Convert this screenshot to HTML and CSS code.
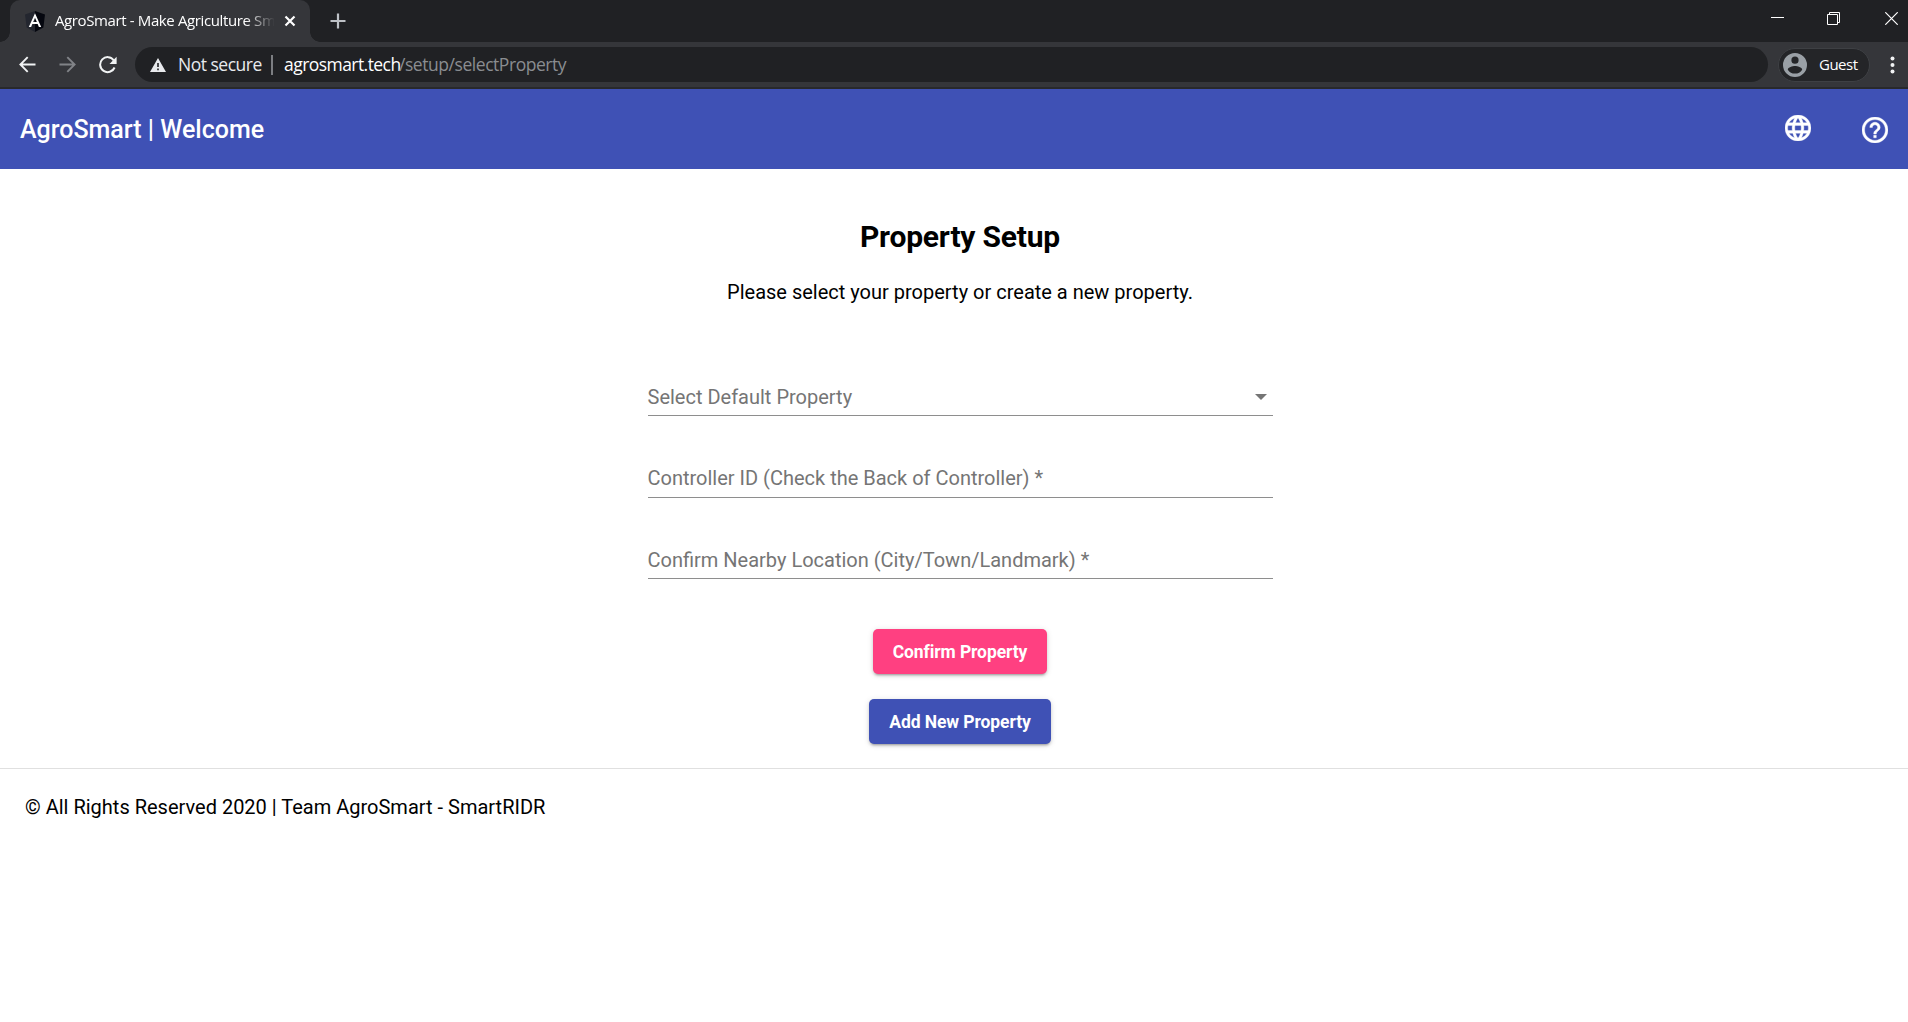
FILE: index.html
```html
<!DOCTYPE html>
<html lang="en">
<head>
<meta charset="utf-8">
<title>AgroSmart - Make Agriculture Smart</title>
<link rel="stylesheet" href="styles.css">
</head>
<body>
<div class="tabstrip">
  <div class="tab">
    <svg class="favicon" width="20" height="21" viewBox="0 0 20 21"><path fill="#23262f" d="M10 0 0 3.5l1.600 13L10 21z"/><path fill="#05070f" d="m10 0 10 3.500-1.600 13L10 21z"/><path fill="#fff" d="M10 2.300 3.800 16h2.300l1.250-3h5.300l1.250 3h2.300zm0 4.400 1.850 4.400h-3.700z"/></svg>
    <span class="tab-title">AgroSmart - Make Agriculture Smart</span>
    <svg class="tab-close" width="12" height="12" viewBox="0 0 12 12"><path d="m1.500 1.500 9 9m0-9-9 9" stroke="#fff" stroke-width="2.200"/></svg>
  </div>
  <svg class="newtab" width="16" height="16" viewBox="0 0 16 16"><path d="M8 .5v15M.5 8h15" stroke="#bdc1c6" stroke-width="2.200"/></svg>
  <div class="window-controls">
    <svg width="13" height="13" viewBox="0 0 13 13"><path d="M0 5.500h13" stroke="#fff"/></svg>
    <svg width="13" height="13" viewBox="0 0 13 13"><path d="M.5 2.500h10v10H.5zm2 0v-2h10v10h-2" fill="none" stroke="#fff"/></svg>
    <svg width="13" height="13" viewBox="0 0 13 13"><path d="m.3.3 12.400 12.400m0-12.400L.3 12.700" stroke="#fff" stroke-width="1.200"/></svg>
  </div>
</div>
<div class="toolbar">
  <svg class="nav" width="17" height="17" viewBox="0 0 17 17"><path d="M16.500 8.500H1.500M8.700 1.200 1.400 8.500l7.300 7.300" fill="none" stroke="#f1f3f4" stroke-width="1.900"/></svg>
  <svg class="nav" width="17" height="17" viewBox="0 0 17 17"><path d="M.5 8.500h15M8.300 1.200l7.300 7.300-7.300 7.300" fill="none" stroke="#818387" stroke-width="1.900"/></svg>
  <svg class="nav" width="18" height="18" viewBox="0 0 18 18"><path d="M15.600 11.500a7.500 7.500 0 1 1-.8-7.200" fill="none" stroke="#f1f3f4" stroke-width="2"/><path d="M17.600.8v7.100h-7.100z" fill="#f1f3f4"/></svg>
  <div class="omnibox">
    <svg width="16" height="14" viewBox="0 0 16 14"><path fill="#e8eaed" fill-rule="evenodd" d="M8 0 0 14h16zM7.200 5h1.600v4H7.200zm0 5.500h1.600v1.700H7.200z"/></svg>
    <span class="insecure">Not secure</span>
    <span class="separator"></span>
    <span class="host">agrosmart.tech</span><span class="path">/setup/selectProperty</span>
  </div>
  <div class="profile">
    <svg width="24" height="24" viewBox="0 0 24 24"><path fill="#9aa0a6" fill-rule="evenodd" d="M12 0a12 12 0 1 0 0 24 12 12 0 0 0 0-24zm0 3.600a3.600 3.600 0 1 1 0 7.200 3.600 3.600 0 0 1 0-7.200zm0 17a8.600 8.600 0 0 1-7.200-3.900c.1-2.400 4.800-3.600 7.200-3.600s7.100 1.200 7.200 3.600a8.600 8.600 0 0 1-7.200 3.900z"/></svg>
    <span>Guest</span>
  </div>
  <svg class="menu" width="5" height="18" viewBox="0 0 5 18"><g fill="#f1f3f4"><circle cx="2.500" cy="2.500" r="2"/><circle cx="2.500" cy="9" r="2"/><circle cx="2.500" cy="15.500" r="2"/></g></svg>
</div>
<header class="appbar">
  <h1 class="brand">AgroSmart | Welcome</h1>
  <svg class="globe" width="26" height="26" viewBox="2 2 20 20"><path fill="#fff" stroke="#fff" stroke-width=".3" d="M11.990 2C6.470 2 2 6.480 2 12s4.470 10 9.990 10C17.520 22 22 17.520 22 12S17.520 2 11.990 2zm6.930 6h-2.950c-.32-1.250-.78-2.450-1.380-3.560 1.840.63 3.370 1.910 4.330 3.560zM12 4.040c.83 1.200 1.480 2.530 1.910 3.960h-3.820c.43-1.430 1.080-2.760 1.910-3.960zM4.260 14C4.100 13.360 4 12.690 4 12s.1-1.360.26-2h3.380c-.08.66-.14 1.320-.14 2s.06 1.340.14 2H4.260zm.82 2h2.950c.32 1.250.78 2.450 1.380 3.560-1.840-.63-3.370-1.900-4.330-3.560zm2.950-8H5.080c.96-1.660 2.490-2.930 4.330-3.560C8.810 5.550 8.350 6.750 8.030 8zM12 19.960c-.83-1.200-1.480-2.530-1.910-3.960h3.820c-.43 1.430-1.080 2.760-1.910 3.960zM14.340 14H9.660c-.09-.66-.16-1.320-.16-2s.07-1.350.16-2h4.680c.09.65.16 1.320.16 2s-.07 1.340-.16 2zm.25 5.560c.6-1.110 1.060-2.310 1.380-3.560h2.950c-.96 1.650-2.490 2.930-4.330 3.560zM16.360 14c.08-.66.14-1.320.14-2s-.06-1.340-.14-2h3.380c.16.640.26 1.310.26 2s-.1 1.360-.26 2h-3.380z"/></svg>
  <svg class="help" width="26" height="26" viewBox="2 2 20 20"><path fill="#fff" stroke="#fff" stroke-width=".3" d="M11 18h2v-2h-2v2zm1-16C6.480 2 2 6.480 2 12s4.480 10 10 10 10-4.480 10-10S17.520 2 12 2zm0 18c-4.410 0-8-3.590-8-8s3.590-8 8-8 8 3.590 8 8-3.590 8-8 8zm0-14c-2.210 0-4 1.790-4 4h2c0-1.100.9-2 2-2s2 .9 2 2c0 2-3 1.750-3 5h2c0-2.250 3-2.500 3-5 0-2.210-1.790-4-4-4z"/></svg>
</header>
<main class="setup">
  <h2 class="title">Property Setup</h2>
  <p class="lead">Please select your property or create a new property.</p>
  <form class="fields">
    <div class="field"><span>Select Default Property</span><i class="arrow"></i></div>
    <div class="field controller"><span>Controller ID (Check the Back of Controller) *</span></div>
    <div class="field"><span>Confirm Nearby Location (City/Town/Landmark) *</span></div>
  </form>
  <button class="btn confirm">Confirm Property</button>
  <button class="btn add">Add New Property</button>
</main>
<footer class="footer">© All Rights Reserved 2020 | Team AgroSmart - SmartRIDR</footer>
</body>
</html>
```
FILE: styles.css
```css
* { box-sizing: border-box; }
body { margin: 0; height: 1022px; overflow: hidden; background: #fff; color: #000; font-family: Roboto, sans-serif; }
svg { display: block; flex: none; }
h1, h2, p { margin: 0; }

.tabstrip { height: 42px; background: #202124; display: flex; align-items: center; padding-left: 10px; color: #fff; font-family: "Open Sans", sans-serif; }
.tab { position: relative; width: 300px; height: 42px; background: #35363a; border-radius: 10px 10px 0 0; display: flex; align-items: center; padding-left: 15px; }
.tab::before, .tab::after { content: ""; position: absolute; bottom: 0; width: 10px; height: 10px; }
.tab::before { left: -10px; background: radial-gradient(circle at 0 0, transparent 9.500px, #35363a 10px); }
.tab::after { right: -10px; background: radial-gradient(circle at 100% 0, transparent 9.500px, #35363a 10px); }
.tab-title { margin-left: 10px; padding-bottom: 2px; width: 219px; overflow: hidden; white-space: nowrap; font-size: 15px; letter-spacing: -.38px; line-height: 22px; -webkit-mask-image: linear-gradient(90deg, #000 190px, transparent 220px); mask-image: linear-gradient(90deg, #000 190px, transparent 220px); }
.tab-close { margin-left: 10px; }
.newtab { margin-left: 19.500px; }
.window-controls { margin-left: auto; padding: 0 10px 5px 0; display: flex; gap: 43px; }
.window-controls svg:nth-child(2) { margin-right: 2px; }

.toolbar { height: 47px; background: #35363a; border-bottom: 2px solid #28292c; display: flex; align-items: center; padding-left: 19px; font-family: "Open Sans", sans-serif; color: #fff; }
.nav + .nav { margin-left: 23px; }
.omnibox { margin-left: 18px; width: 1633px; height: 35px; border-radius: 18px; background: #202124; display: flex; align-items: center; padding-left: 15px; font-size: 17.500px; white-space: nowrap; }
.insecure, .host, .path, .profile span { padding-bottom: 1px; }
.insecure { margin-left: 12px; width: 84px; color: #e8eaed; letter-spacing: -.5px; }
.separator { width: 2px; height: 20px; margin: 0 11px 0 9px; background: #7c7e82; }
.host { width: 115px; letter-spacing: -.55px; }
.path { color: #8a8d91; letter-spacing: -.45px; }
.profile { margin-left: 10px; width: 92px; height: 34px; border: 1px solid #3e4044; border-radius: 17px; background: #242528; display: flex; align-items: center; gap: 12px; padding-left: 4px; font-size: 15px; letter-spacing: -.5px; }
.menu { margin-left: 20px; }

.appbar { height: 80px; padding: 0 20px; background: #3f51b5; color: #fff; display: flex; align-items: center; }
.brand { padding-top: 2px; font-size: 25px; font-weight: 500; line-height: 40px; margin-right: auto; }
.globe { margin: 0 51px 2px 0; }
.help { margin-top: 2px; }

.setup { height: 599px; padding: 48px 0 0 12px; display: flex; flex-direction: column; align-items: center; }
.title { font-size: 30px; font-weight: 700; line-height: 40px; letter-spacing: -.2px; }
.lead { margin-top: 21px; font-size: 20px; line-height: 28px; }
.fields { width: 625px; padding-top: 65px; display: grid; grid-auto-rows: 81.500px; }
.field { height: 45px; border-bottom: 1px solid #8e8e8e; display: flex; justify-content: space-between; padding: 12px 6px 0 0; font-size: 20px; line-height: 28px; color: #757575; }
.controller { padding-top: 11px; }
.arrow { margin-top: 11px; width: 0; height: 0; border: 6px solid transparent; border-top-color: #757575; border-bottom: 0; }
.btn { flex: none; height: 45px; padding: 1px 0 0; border: 0; border-radius: 5px; color: #fff; font: 700 17.500px/44px Roboto, sans-serif; letter-spacing: -.1px; box-shadow: 0 3px 2px -2px rgba(0,0,0,.2), 0 2px 3px rgba(0,0,0,.14), 0 1px 6px rgba(0,0,0,.12); }
.confirm { width: 174px; margin-top: 13px; background: #ff4081; }
.add { width: 182px; margin-top: 25px; background: #3f51b5; }

.footer { border-top: 1px solid #e0e0e0; padding: 24px 25px 0; font-size: 20px; line-height: 28px; }
```
